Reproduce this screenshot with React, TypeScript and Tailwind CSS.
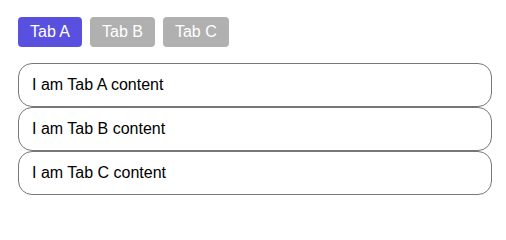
const tabs = ["Tab A", "Tab B", "Tab C"];

export default function App() {
  const active = "Tab A";

  return (
    <div className="min-h-screen bg-white pl-[18px] pr-[14px] pt-[17px] font-['Liberation_Sans',Arial,sans-serif] text-black">
      <div className="flex gap-[8px]">
        {tabs.map((t) => (
          <button
            key={t}
            className={
              "h-[30px] rounded-[4px] px-[12px] text-[16px] leading-[30px] text-white " +
              (t === active ? "bg-[#5a50e0]" : "bg-[#b0b0b0]")
            }
          >
            {t}
          </button>
        ))}
      </div>
      <div className="mt-[16px] flex flex-col">
        {tabs.map((t) => (
          <div
            key={t}
            className="flex h-[44px] items-center rounded-[14px] border border-[#777777] px-[13px] text-[16px]"
          >
            I am {t} content
          </div>
        ))}
      </div>
    </div>
  );
}
